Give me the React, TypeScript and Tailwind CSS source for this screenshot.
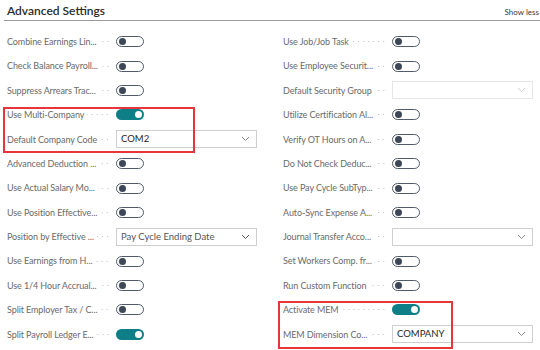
import React from "react";

type Row =
  | { kind: "toggle"; label: string; on?: boolean }
  | { kind: "select"; label: string; value?: string; variant?: "normal" | "disabled" | "muted" };

const left: Row[] = [
  { kind: "toggle", label: "Combine Earnings Lin..." },
  { kind: "toggle", label: "Check Balance Payroll..." },
  { kind: "toggle", label: "Suppress Arrears Trac..." },
  { kind: "toggle", label: "Use Multi-Company", on: true },
  { kind: "select", label: "Default Company Code", value: "COM2" },
  { kind: "toggle", label: "Advanced Deduction ..." },
  { kind: "toggle", label: "Use Actual Salary Mo..." },
  { kind: "toggle", label: "Use Position Effective..." },
  { kind: "select", label: "Position by Effective ...", value: "Pay Cycle Ending Date", variant: "muted" },
  { kind: "toggle", label: "Use Earnings from H..." },
  { kind: "toggle", label: "Use 1/4 Hour Accrual..." },
  { kind: "toggle", label: "Split Employer Tax / C..." },
  { kind: "toggle", label: "Split Payroll Ledger E...", on: true },
];

const right: Row[] = [
  { kind: "toggle", label: "Use Job/Job Task" },
  { kind: "toggle", label: "Use Employee Securit..." },
  { kind: "select", label: "Default Security Group", variant: "disabled" },
  { kind: "toggle", label: "Utilize Certification Al..." },
  { kind: "toggle", label: "Verify OT Hours on A..." },
  { kind: "toggle", label: "Do Not Check Deduc..." },
  { kind: "toggle", label: "Use Pay Cycle SubTyp..." },
  { kind: "toggle", label: "Auto-Sync Expense A..." },
  { kind: "select", label: "Journal Transfer Acco..." },
  { kind: "toggle", label: "Set Workers Comp. fr..." },
  { kind: "toggle", label: "Run Custom Function" },
  { kind: "toggle", label: "Activate MEM", on: true },
  { kind: "select", label: "MEM Dimension Co...", value: "COMPANY" },
];

function Toggle({ on }: { on?: boolean }) {
  if (on) {
    return (
      <div className="flex h-[11px] w-[28px] items-center justify-end rounded-full bg-[#0e7f86] pr-[2px]">
        <div className="h-[7px] w-[7px] rounded-full bg-white" />
      </div>
    );
  }
  return (
    <div className="flex h-[11px] w-[28px] items-center rounded-full border-[1.5px] border-[#4f5a6a] bg-white pl-[2px]">
      <div className="h-[7px] w-[7px] rounded-full bg-[#3d4758]" />
    </div>
  );
}

function Chevron({ color }: { color: string }) {
  return (
    <svg width="9" height="6" viewBox="0 0 9 6" fill="none">
      <path d="M1 1l3.5 3.5L8 1" stroke={color} strokeWidth="1" />
    </svg>
  );
}

function Select({ value, variant = "normal" }: { value?: string; variant?: "normal" | "disabled" | "muted" }) {
  const border = variant === "disabled" ? "border-[#e6e6e6]" : "border-[#cfcfcf]";
  const text = variant === "muted" ? "text-[#555]" : "text-[#262626]";
  const chev = variant === "disabled" ? "#d0d0d0" : variant === "muted" ? "#555" : "#8a8a8a";
  return (
    <div className={`flex h-[18px] w-[141px] items-center justify-between border ${border} bg-white pl-[4px] pr-[6px]`}>
      <span className={`text-[9.5px] font-normal ${text}`}>{value ?? ""}</span>
      <Chevron color={chev} />
    </div>
  );
}

function Field({ row }: { row: Row }) {
  return (
    <div className="flex h-[24.4px] items-center">
      <div className="flex w-[103px] items-center">
        <span className="whitespace-nowrap text-[9px] tracking-[-0.1px] text-[#6a6a6a]">{row.label}</span>
        <div className="ml-[3px] h-[3px] min-w-[5px] flex-1 bg-[radial-gradient(circle,#bdbdbd_0.6px,transparent_0.9px)] bg-[length:5px_3px] bg-right bg-repeat-x" />
      </div>
      <div className="ml-[6px] flex items-center">
        {row.kind === "toggle" ? <Toggle on={row.on} /> : <Select value={row.value} variant={row.variant} />}
      </div>
    </div>
  );
}

export default function App() {
  return (
    <div className="relative h-[350px] w-[540px] overflow-hidden bg-white font-['Lato','Noto_Sans',sans-serif]">
      <div className="ml-[4px] flex h-[21px] items-end justify-between border-b-[1.5px] border-[#9a9a9a] pb-[3px]">
        <span className="pl-[3px] text-[12px] font-semibold leading-none text-[#2b2b2b]">Advanced Settings</span>
        <span className="pr-[1px] pb-[1px] text-[8px] leading-none text-[#3a3a3a]">Show less</span>
      </div>
      <div className="grid grid-cols-[276px_264px] pt-[8.5px]">
        <div className="flex flex-col pl-[7px]">
          {left.map((r, i) => (
            <Field key={i} row={r} />
          ))}
        </div>
        <div className="flex flex-col pl-[7px]">
          {right.map((r, i) => (
            <Field key={i} row={r} />
          ))}
        </div>
      </div>
      <div className="pointer-events-none absolute left-[3px] top-[107px] h-[46px] w-[192px] border-2 border-[#e8343b]" />
      <div className="pointer-events-none absolute left-[278px] top-[301px] h-[48px] w-[175px] border-2 border-[#e8343b]" />
    </div>
  );
}
